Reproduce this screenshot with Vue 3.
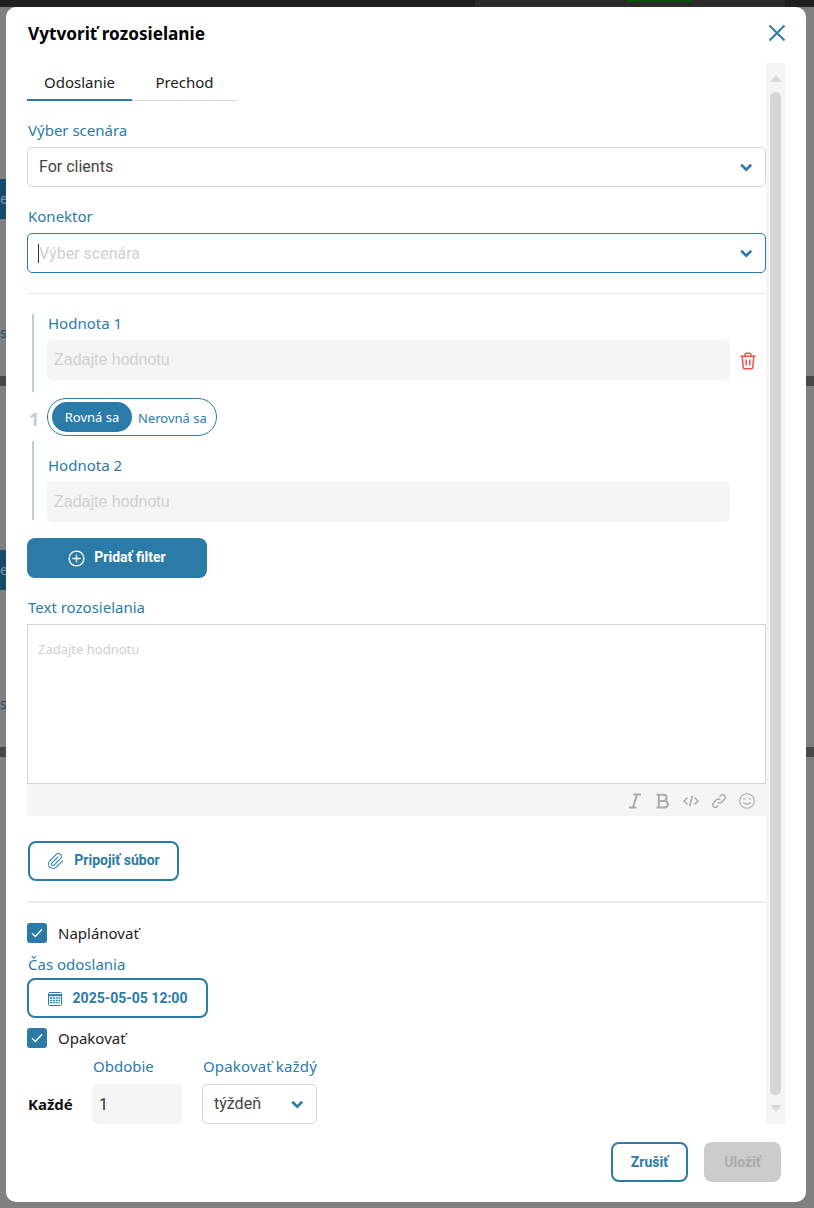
<script setup>
const backdropBars = [376, 747]
const backdropTabs = [179, 550]
const backdropText = [323, 694]
</script>

<template>
  <div class="page">
    <div class="backdrop" aria-hidden="true">
      <div class="top-a"></div>
      <div class="top-b"></div>
      <div class="top-green"></div>
      <div v-for="y in backdropTabs" :key="'t' + y" class="bd-tab" :style="{ top: y + 'px' }"><span>e</span></div>
      <div v-for="y in backdropText" :key="'s' + y" class="bd-text" :style="{ top: y + 'px' }"><span>sl</span></div>
      <div v-for="y in backdropBars" :key="'b' + y" class="bd-bar" :style="{ top: y + 'px' }"></div>
    </div>

    <section class="modal">
      <header class="head">
        <h1>Vytvoriť rozosielanie</h1>
        <svg class="close" width="18" height="18" viewBox="0 0 18 18"><path d="M1.5 1.5l15 15M16.5 1.5l-15 15" fill="none" stroke="#2b7ba9" stroke-width="2"/></svg>
      </header>

      <div class="body">
        <div class="content">
          <nav class="tabs">
            <div class="tab active">Odoslanie</div>
            <div class="tab">Prechod</div>
          </nav>

          <label class="label first">Výber scenára</label>
          <div class="select">
            <span class="value">For clients</span>
            <svg class="chev" width="14" height="9" viewBox="0 0 14 9"><path d="M2.2 1.8L7.2 6.6l5-4.800" fill="none" stroke="#2b7ba9" stroke-width="2.6"/></svg>
          </div>

          <label class="label gap">Konektor</label>
          <div class="select focus">
            <i class="caret"></i>
            <span class="ph">Výber scenára</span>
            <svg class="chev" width="14" height="9" viewBox="0 0 14 9"><path d="M2.2 1.8L7.2 6.6l5-4.800" fill="none" stroke="#2b7ba9" stroke-width="2.6"/></svg>
          </div>

          <hr class="hr-thin" />

          <div class="cond one">
            <label class="label">Hodnota 1</label>
            <div class="cond-input">
              <input class="fill" placeholder="Zadajte hodnotu" />
              <svg class="trash" width="18" height="18" viewBox="0 0 18 18" fill="none" stroke="#f0514d" stroke-width="1.5"><path d="M1.5 4.2h15M3.2 4.2l1 11.2a1.4 1.4 0 0 0 1.4 1.3h6.8a1.4 1.4 0 0 0 1.4-1.3l1-11.2M6 4V2.6A1.3 1.3 0 0 1 7.3 1.3h3.4A1.3 1.3 0 0 1 12 2.6V4M7.2 7.5v6M10.8 7.5v6"/></svg>
            </div>
          </div>

          <div class="op-row">
            <span class="num">1</span>
            <div class="toggle">
              <span class="pill">Rovná sa</span>
              <span class="off">Nerovná sa</span>
            </div>
          </div>

          <div class="cond two">
            <label class="label">Hodnota 2</label>
            <input class="fill" placeholder="Zadajte hodnotu" />
          </div>

          <button class="btn primary add">
            <svg width="17" height="17" viewBox="0 0 17 17" fill="none" stroke="#fff" stroke-width="1.3"><circle cx="8.5" cy="8.5" r="7.4"/><path d="M8.5 4.4v8.2M4.4 8.5h8.2"/></svg>
            <span class="lift">Pridať filter</span>
          </button>

          <label class="label text-label">Text rozosielania</label>
          <textarea class="area" placeholder="Zadajte hodnotu"></textarea>
          <div class="toolbar">
            <svg width="16" height="16" viewBox="0 0 16 16" fill="none" stroke="#aaa" stroke-width="2"><path d="M6.5 1.5h7.5M2 14.5h7.5M10.2 1.5L5.8 14.5"/></svg>
            <svg width="16" height="16" viewBox="0 0 16 16" fill="none" stroke="#aaa" stroke-width="2"><path d="M1.5 1.8h7a3.1 3.1 0 0 1 0 6.2H3.8M3.8 8h6a3.2 3.2 0 0 1 0 6.4H1.5M3.8 1.8v12.6"/></svg>
            <svg width="16" height="16" viewBox="0 0 16 16" fill="none" stroke="#aaa" stroke-width="1.5"><path d="M4.5 4.5L1 8l3.5 3.5M11.5 4.5L15 8l-3.5 3.5M9.4 2.8L6.6 13.2"/></svg>
            <svg width="16" height="16" viewBox="0 0 16 16" fill="none" stroke="#aaa" stroke-width="1.4"><path d="M6.8 9.2a2.6 2.6 0 0 0 3.7 0l3-3a2.6 2.6 0 0 0-3.7-3.7L8.6 3.7M9.2 6.8a2.6 2.6 0 0 0-3.7 0l-3 3a2.6 2.6 0 0 0 3.7 3.7l1.2-1.2"/></svg>
            <svg width="16" height="16" viewBox="0 0 16 16" fill="none" stroke="#aaa" stroke-width="1.1"><circle cx="8" cy="8" r="7.3"/><path d="M4.2 6.4q1-1 2 0M9.8 6.4q1-1 2 0M4.3 9.5q3.7 3.4 7.4 0"/></svg>
          </div>

          <button class="btn outline attach">
            <svg width="18" height="18" viewBox="0 0 24 24" fill="none" stroke="#2b7ba9" stroke-width="1.4"><path d="M21.44 11.05l-9.19 9.19a6 6 0 0 1-8.49-8.49l8.57-8.57A4 4 0 1 1 18 8.84l-8.59 8.57a2 2 0 0 1-2.83-2.83l8.49-8.48"/></svg>
            <span class="lift">Pripojiť súbor</span>
          </button>

          <hr class="hr-thick" />

          <div class="check first-check">
            <span class="box"><svg width="12" height="10" viewBox="0 0 12 10"><path d="M1 5.2l3.4 3.3L11 1.2" fill="none" stroke="#fff" stroke-width="1.3"/></svg></span>
            <span>Naplánovať</span>
          </div>

          <label class="label time-label">Čas odoslania</label>
          <button class="btn outline date">
            <svg width="14" height="15" viewBox="0 0 14 15" fill="none" stroke="#2b7ba9"><rect x=".5" y="1.5" width="13" height="13" rx="1"/><path d="M.5 4.2h13" stroke-width="2"/><path d="M2 7h10M2 9.3h10M2 11.7h10" stroke-width="1.3" stroke-dasharray="2 .8"/></svg>
            <span>2025-05-05 12:00</span>
          </button>

          <div class="check repeat-check">
            <span class="box"><svg width="12" height="10" viewBox="0 0 12 10"><path d="M1 5.2l3.4 3.3L11 1.2" fill="none" stroke="#fff" stroke-width="1.3"/></svg></span>
            <span>Opakovať</span>
          </div>

          <div class="period">
            <strong class="every">Každé</strong>
            <div class="col col-num">
              <label class="label">Obdobie</label>
              <input class="fill num-in" value="1" />
            </div>
            <div class="col col-sel">
              <label class="label">Opakovať každý</label>
              <div class="select small">
                <span class="value">týždeň</span>
                <svg class="chev" width="14" height="9" viewBox="0 0 14 9"><path d="M2.2 1.8L7.2 6.6l5-4.800" fill="none" stroke="#2b7ba9" stroke-width="2.6"/></svg>
              </div>
            </div>
          </div>
        </div>

        <div class="scrollbar" aria-hidden="true">
          <i class="arrow up"></i>
          <i class="thumb"></i>
          <i class="arrow down"></i>
        </div>
      </div>

      <footer class="foot">
        <button class="btn outline small-btn">Zrušiť</button>
        <button class="btn disabled small-btn">Uložiť</button>
      </footer>
    </section>
  </div>
</template>

<style>
html, body { margin: 0; background: #808080; }
</style>

<style scoped>
* { box-sizing: border-box; }
.page {
  position: relative;
  width: 814px;
  height: 1208px;
  overflow: hidden;
  background: #808080;
  padding: 7px 8px 6px 6px;
  font-family: "Noto Sans", "Open Sans", sans-serif;
}
.backdrop { position: absolute; inset: 0; }
.top-a { position: absolute; left: 0; top: 0; width: 100%; height: 7px; background: #1f1f1f; }
.top-b { position: absolute; left: 475px; top: 0; width: 310px; height: 7px; background: #2a2a2a; }
.top-green { position: absolute; left: 626px; top: 0; width: 67px; height: 2px; background: #0b4d0b; }
.bd-tab { position: absolute; left: 0; width: 12px; height: 40px; background: #174a68; color: #7f98a8; font: 14px/40px "Noto Sans", sans-serif; }
.bd-text { position: absolute; left: 0; width: 20px; height: 20px; color: #174a68; font: 14px/20px "Noto Sans", sans-serif; }
.bd-bar { position: absolute; left: 0; width: 100%; height: 10px; background: #474747; }

.modal {
  position: relative;
  height: 1195px;
  background: #fff;
  border-radius: 10px;
  display: flex;
  flex-direction: column;
}
.head {
  height: 56px;
  flex: none;
  display: flex;
  align-items: center;
  justify-content: space-between;
  padding: 0 20px 2px 22px;
}
h1 { margin: 0; font-size: 17.2px; line-height: 24px; font-weight: 700; color: #000; }
.close { margin-top: -2px; }

.body { height: 1061px; flex: none; display: flex; padding-left: 21px; overflow: hidden; }
.content { width: 739px; flex: none; }

.tabs { display: flex; width: 210px; margin-top: 7px; }
.tab { width: 105px; height: 31px; text-align: center; font-size: 15px; line-height: 24px; color: #222; border-bottom: 1px solid #d8d8d8; }
.tab.active { border-bottom: 2px solid #2b7ba9; }

.label { display: block; height: 20px; font-size: 15px; line-height: 18px; color: #2b7ba9; margin-bottom: 6px; margin-left: 1px; }
.first { margin-top: 20px; }
.gap { margin-top: 20px; }

.select {
  height: 40px;
  border: 1px solid #d4d4d4;
  border-radius: 5px;
  display: flex;
  align-items: center;
  padding: 0 12px 0 11px;
  font-family: Roboto, sans-serif;
  font-size: 16px;
  color: #444;
}
.value { padding-bottom: 2px; }
.select .chev { margin-left: auto; }
.select.focus { border-color: #2b7ba9; }
.caret { width: 1px; height: 19px; background: #333; margin-left: -1px; }
.ph { color: #cfcfcf; }

.hr-thin { border: 0; height: 1px; background: #e8e8e8; margin: 20px 0; }
.hr-thick { border: 0; height: 2px; background: #ececec; margin: 20px 0; }

.cond { margin-left: 5px; border-left: 2px solid #b9cfdd; padding-left: 13px; }
.cond.one { height: 78px; }
.cond.two { height: 79px; padding-top: 15px; }
.cond-input { display: flex; align-items: center; }
.trash { margin-left: 9px; margin-top: 1px; }
.fill {
  display: block;
  width: 683px;
  height: 40px;
  border: 0;
  outline: 0;
  background: #f5f5f5;
  border-radius: 5px;
  padding: 0 7px;
  font-family: "Liberation Sans", Arial, sans-serif;
  font-size: 16px;
  color: #333;
}
.fill::placeholder { color: #cfcfcf; opacity: 1; }

.op-row { display: flex; align-items: center; height: 38px; margin: 6px 0 5px; padding-left: 2px; }
.num { width: 18px; font-size: 18px; font-weight: 700; color: #b9cfdd; padding-top: 4px; }
.toggle {
  width: 170px;
  height: 38px;
  border: 1px solid #2b7ba9;
  border-radius: 19px;
  padding: 3px 4px;
  display: flex;
  align-items: center;
  font-size: 13px;
  color: #2b7ba9;
}
.pill { width: 80px; height: 30px; border-radius: 15px; background: #2b7ba9; color: #fff; text-align: center; line-height: 31px; }
.off { margin-left: 6px; padding-top: 1px; white-space: nowrap; }

.btn {
  display: flex;
  align-items: center;
  justify-content: center;
  height: 40px;
  border-radius: 8px;
  font-family: Roboto, sans-serif;
  font-size: 14px;
  font-weight: 700;
  padding: 0;
  cursor: pointer;
}
.lift { padding-bottom: 2px; }
.primary { background: #2b7ba9; color: #fff; border: 0; }
.outline { background: #fff; color: #2b7ba9; border: 2px solid #2b7ba9; }
.disabled { background: #ccc; color: #aaa; border: 0; }
.add { width: 180px; margin-top: 18px; gap: 9px; }

.text-label { margin-top: 19px; margin-bottom: 7px; line-height: 20px; }
.area {
  display: block;
  width: 739px;
  height: 160px;
  border: 1px solid #d4d4d4;
  outline: 0;
  resize: none;
  padding: 16px 10px;
  font-family: "Noto Sans", sans-serif;
  font-size: 13px;
  line-height: 17px;
}
.area::placeholder { color: #cfcfcf; opacity: 1; }
.toolbar {
  height: 32px;
  background: #f5f5f5;
  display: flex;
  align-items: center;
  justify-content: flex-end;
  gap: 12px;
  padding: 2px 11px 0 0;
}

.attach { width: 151px; margin: 25px 0 0 1px; gap: 9px; }
.check { display: flex; align-items: center; gap: 11px; height: 20px; font-size: 15px; color: #222; }
.box { width: 20px; height: 20px; border-radius: 3px; background: #2b7ba9; display: flex; align-items: center; justify-content: center; }
.time-label { margin: 11px 0 4px 1px; line-height: 20px; }
.date { width: 181px; gap: 11px; }
.repeat-check { margin-top: 10px; }

.period { display: flex; align-items: flex-end; margin-top: 9px; }
.every { width: 64px; padding-left: 1px; height: 40px; line-height: 40px; font-size: 15px; font-weight: 700; color: #111; }
.col-num { width: 90px; margin-left: 1px; }
.col-num .label { margin-bottom: 7px; }
.col-sel { width: 115px; margin-left: 20px; }
.col-sel .label { margin-bottom: 7px; white-space: nowrap; letter-spacing: .15px; }
.num-in { width: 90px; font-family: Roboto, sans-serif; padding: 0 7px; }

.scrollbar {
  width: 19px;
  flex: none;
  background: #f5f5f5;
  padding: 12px 0;
  display: flex;
  flex-direction: column;
  align-items: center;
}
.arrow { width: 0; height: 0; border-left: 6.5px solid transparent; border-right: 6.5px solid transparent; flex: none; }
.arrow.up { border-bottom: 7px solid #d9d9d9; }
.arrow.down { border-top: 7px solid #d9d9d9; }
.thumb { width: 11px; flex: 1; background: #d6d6d6; border-radius: 6px; margin: 10px 0; }

.foot { display: flex; justify-content: flex-end; gap: 16px; padding: 18px 25px 0 0; }
.small-btn { width: 77px; }
</style>
